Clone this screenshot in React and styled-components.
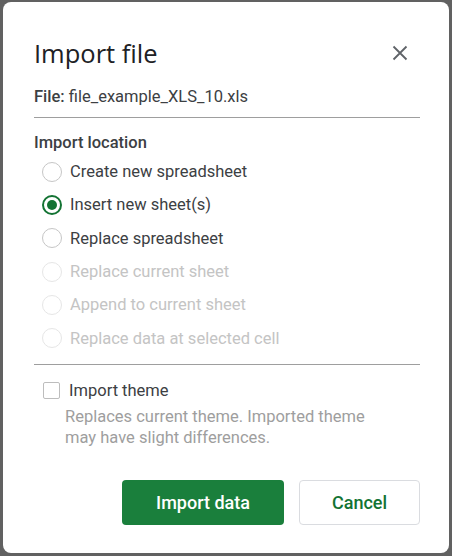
import React, { useState } from "react";
import styled, { createGlobalStyle } from "styled-components";

const GlobalStyle = createGlobalStyle`
  html, body {
    margin: 0;
    padding: 0;
    background: #616161;
    font-family: Roboto, "Liberation Sans", Arial, sans-serif;
  }
  * { box-sizing: border-box; }
`;

const Backdrop = styled.div`
  width: 452px;
  height: 556px;
  padding: 2px 3px 3px 3px;
  background: #616161;
`;

const Dialog = styled.div`
  width: 446px;
  height: 551px;
  background: #fff;
  border-radius: 8px;
  padding: 35px 29px 0 31px;
  display: flex;
  flex-direction: column;
  color: #3c4043;
`;

const Header = styled.div`
  display: flex;
  align-items: center;
  justify-content: space-between;
  height: 32px;
`;

const Title = styled.h1`
  margin: 0;
  font-family: "Open Sans", Roboto, sans-serif;
  font-size: 25.5px;
  font-weight: 400;
  line-height: 32px;
  color: #202124;
`;

const CloseButton = styled.button`
  width: 24px;
  height: 24px;
  padding: 0;
  margin-right: 8px;
  border: none;
  background: none;
  display: flex;
  align-items: center;
  justify-content: center;
  cursor: pointer;
`;

const FileRow = styled.div`
  margin-top: 18px;
  font-size: 16.5px;
  line-height: 20px;
  padding-bottom: 10px;
  border-bottom: 1px solid #9e9e9e;
  color: #3c4043;
  b { font-weight: 500; }
`;

const SectionLabel = styled.div`
  margin-top: 15px;
  font-size: 16.5px;
  font-weight: 500;
  line-height: 20px;
`;

const RadioList = styled.div`
  display: flex;
  flex-direction: column;
  margin-top: 2px;
  padding-bottom: 9px;
  border-bottom: 1px solid #9e9e9e;
`;

const RadioRow = styled.label`
  display: flex;
  align-items: center;
  gap: 8px;
  height: 33.3px;
  padding-left: 8px;
  font-size: 16.5px;
  color: ${(p) => (p.disabled ? "#c4c4c4" : "#3c4043")};
  cursor: ${(p) => (p.disabled ? "default" : "pointer")};
`;

const RadioCircle = styled.span`
  width: 20px;
  height: 20px;
  border-radius: 50%;
  border: ${(p) => (p.checked ? "2px solid #137333" : `1px solid ${p.disabled ? "#e6e6e6" : "#c6c6c6"}`)};
  display: flex;
  align-items: center;
  justify-content: center;
  &::after {
    content: "";
    width: 10px;
    height: 10px;
    border-radius: 50%;
    background: #137333;
    display: ${(p) => (p.checked ? "block" : "none")};
  }
`;

const CheckRow = styled.label`
  display: flex;
  align-items: center;
  gap: 9px;
  margin-top: 16px;
  padding-left: 9px;
  font-size: 16.5px;
  line-height: 20px;
`;

const CheckBox = styled.span`
  width: 17px;
  height: 17px;
  border: 1px solid #bdbdbd;
  border-radius: 2px;
`;

const Hint = styled.p`
  margin: 5px 0 0 31px;
  font-size: 16.5px;
  line-height: 21px;
  color: #9e9e9e;
`;

const Actions = styled.div`
  display: flex;
  justify-content: flex-end;
  gap: 15px;
  margin-top: 32px;
`;

const Button = styled.button`
  height: 45px;
  width: ${(p) => p.w}px;
  border-radius: 4px;
  font-family: inherit;
  font-size: 18px;
  font-weight: 500;
  cursor: pointer;
  background: ${(p) => (p.primary ? "#1a7f3c" : "#fff")};
  color: ${(p) => (p.primary ? "#fff" : "#137333")};
  border: ${(p) => (p.primary ? "none" : "1px solid #dadce0")};
`;

const options = [
  { label: "Create new spreadsheet" },
  { label: "Insert new sheet(s)" },
  { label: "Replace spreadsheet" },
  { label: "Replace current sheet", disabled: true },
  { label: "Append to current sheet", disabled: true },
  { label: "Replace data at selected cell", disabled: true },
];

const App = () => {
  const [selected, setSelected] = useState(1);

  return (
    <Backdrop>
      <GlobalStyle />
      <Dialog>
        <Header>
          <Title>Import file</Title>
          <CloseButton aria-label="Close">
            <svg width="16" height="16" viewBox="0 0 16 16">
              <path d="M1.5 1.5 L14.5 14.5 M14.5 1.5 L1.5 14.5" stroke="#5f6368" strokeWidth="1.8" />
            </svg>
          </CloseButton>
        </Header>
        <FileRow>
          <b>File:</b> file_example_XLS_10.xls
        </FileRow>
        <SectionLabel>Import location</SectionLabel>
        <RadioList>
          {options.map((o, i) => (
            <RadioRow
              key={o.label}
              disabled={o.disabled}
              onClick={() => !o.disabled && setSelected(i)}
            >
              <RadioCircle checked={selected === i} disabled={o.disabled} />
              {o.label}
            </RadioRow>
          ))}
        </RadioList>
        <CheckRow>
          <CheckBox />
          Import theme
        </CheckRow>
        <Hint>
          Replaces current theme. Imported theme
          <br />
          may have slight differences.
        </Hint>
        <Actions>
          <Button primary w={162}>Import data</Button>
          <Button w={121}>Cancel</Button>
        </Actions>
      </Dialog>
    </Backdrop>
  );
};

export default App;
